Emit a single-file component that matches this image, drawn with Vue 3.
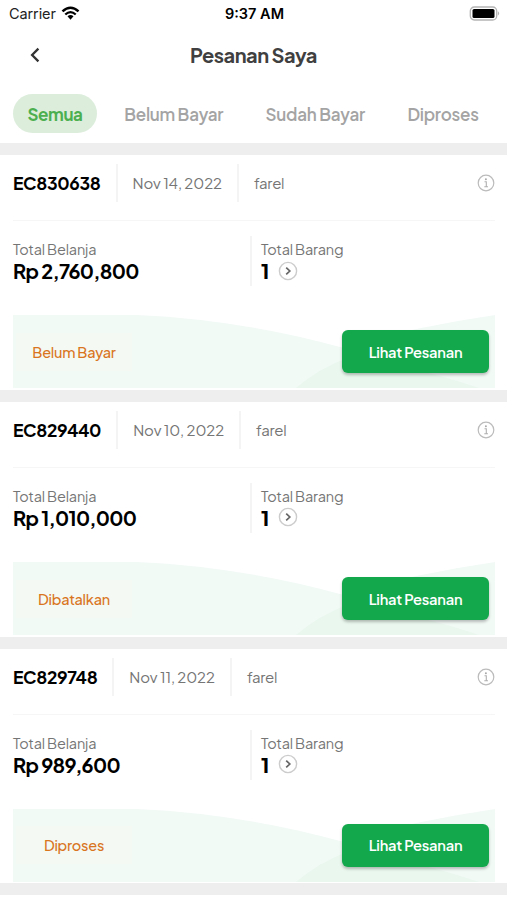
<script setup>
const tabs = ['Semua', 'Belum Bayar', 'Sudah Bayar', 'Diproses']
const orders = [
  { id: 'EC830638', date: 'Nov 14, 2022', user: 'farel', total: 'Rp 2,760,800', items: 1, status: 'Belum Bayar' },
  { id: 'EC829440', date: 'Nov 10, 2022', user: 'farel', total: 'Rp 1,010,000', items: 1, status: 'Dibatalkan' },
  { id: 'EC829748', date: 'Nov 11, 2022', user: 'farel', total: 'Rp 989,600', items: 1, status: 'Diproses' },
]
</script>

<template>
  <main class="screen">
    <div class="statusbar">
      <div class="carrier">
        <span>Carrier</span>
        <svg class="wifi" viewBox="0 0 20 15" width="19" height="14">
          <path d="M1.4 5.8 Q10 -2 18.6 5.8" fill="none" stroke="#000" stroke-width="2.7" />
          <path d="M4.4 9.1 Q10 4 15.6 9.1" fill="none" stroke="#000" stroke-width="2.5" />
          <path d="M6.8 11 Q10 8.2 13.2 11 L10 14.6 Z" fill="#000" />
        </svg>
      </div>
      <span class="clock">9:37 AM</span>
      <svg class="battery" viewBox="0 0 31 15" width="31" height="15">
        <rect x="1.3" y="1" width="26.4" height="13" rx="4" fill="#fff" stroke="#b4b4b4" stroke-width="1.3" />
        <rect x="3.5" y="3" width="22" height="9" rx="1.6" fill="#000" />
        <path d="M28.9 5.3 Q31.4 7.5 28.9 9.7 Z" fill="#b4b4b4" />
      </svg>
    </div>

    <header class="titlebar">
      <svg class="back" viewBox="0 0 12 16" width="12" height="16">
        <path d="M8.4 1.6 L2.1 8 L8.4 14.4" fill="none" stroke="#333" stroke-width="2.3" />
      </svg>
      <h1>Pesanan Saya</h1>
    </header>

    <nav class="tabs">
      <button v-for="(tab, i) in tabs" :key="tab" class="tab" :class="['tab-' + i, { active: i === 0 }]">
        <span>{{ tab }}</span>
      </button>
    </nav>

    <article v-for="order in orders" :key="order.id" class="order">
      <div class="meta">
        <strong class="id">{{ order.id }}</strong>
        <span class="date">{{ order.date }}</span>
        <span class="user">{{ order.user }}</span>
        <svg class="info" viewBox="0 0 18 18" width="18" height="18">
          <circle cx="9" cy="9" r="7.8" fill="none" stroke="#bbb" stroke-width="1.2" />
          <circle cx="8.9" cy="5.2" r="1" fill="#a8a8a8" />
          <path d="M7.5 7.8 H9.3 V12.7 M7.3 12.8 H11" fill="none" stroke="#b0b0b0" stroke-width="1.1" />
        </svg>
      </div>

      <div class="totals">
        <div class="total">
          <span class="label">Total Belanja</span>
          <strong class="value">{{ order.total }}</strong>
        </div>
        <div class="total goods">
          <span class="label">Total Barang</span>
          <div class="count">
            <strong class="value">{{ order.items }}</strong>
            <svg class="go" viewBox="0 0 20 20" width="20" height="20">
              <circle cx="10" cy="10" r="8.6" fill="#fff" stroke="#ccc" stroke-width="1.4" />
              <path d="M8.2 6.6 L11.8 10 L8.2 13.4" fill="none" stroke="#666" stroke-width="1.7" />
            </svg>
          </div>
        </div>
      </div>

      <div class="actions">
        <svg class="waves" viewBox="0 0 482 74" preserveAspectRatio="none">
          <path d="M0 0 H125 Q230 5 329 33 Q400 12 482 0 V74 H0 Z" fill="#f2faf6" />
          <path d="M283 74 Q306 54 335 43 Q410 54 466 74 Z" fill="#e9f7ee" />
        </svg>
        <span class="state">{{ order.status }}</span>
        <button class="view">Lihat Pesanan</button>
      </div>
    </article>
  </main>
</template>

<style>
body { margin: 0; background: #fff; }
</style>

<style scoped>
.screen {
  width: 507px;
  height: 900px;
  overflow: hidden;
  background: #fff;
  font-family: "Plus Jakarta Sans", Inter, sans-serif;
  color: #000;
}
button { border: 0; padding: 0; background: none; font: inherit; color: inherit; letter-spacing: inherit; white-space: nowrap; }
span, strong { white-space: nowrap; }

.statusbar {
  display: grid;
  grid-template-columns: 1fr auto 1fr;
  align-items: center;
  height: 27px;
  padding: 0 7px 0 9px;
  font-family: Inter, sans-serif;
  font-size: 14.5px;
}
.carrier { display: flex; align-items: center; gap: 5px; color: #222; letter-spacing: -0.1px; }
.wifi { margin-top: -2px; }
.clock { font-weight: 600; }
.battery { justify-self: end; }

.titlebar {
  display: grid;
  grid-template-columns: 29px 1fr 29px;
  align-items: center;
  height: 55px;
  padding: 0 13px 2px;
}
.back { justify-self: end; }
h1 { margin: 0; text-align: center; font-size: 20px; line-height: 26px; font-weight: 700; color: #404040; letter-spacing: -0.5px; }

.tabs {
  display: flex;
  align-items: center;
  height: 39px;
  padding: 10px 0 10px 13px;
  border-bottom: 12px solid #eee;
  font-size: 17px;
  font-weight: 600;
  letter-spacing: -0.25px;
  color: #a4a4a4;
}
.tab { width: 141.5px; height: 39px; flex: none; padding-top: 1px; }
.tab-0 { width: 84px; margin-right: 6px; }
.tab-3 { width: 114px; }
.active { border-radius: 20px; background: #dceddc; color: #4caf50; font-weight: 700; letter-spacing: -0.4px; }

.order { height: 234.8px; border-bottom: 12px solid #eee; padding: 0 12px 0 13px; display: flex; flex-direction: column; }
.meta { display: flex; align-items: center; height: 66px; flex: none; border-bottom: 1px solid #f6f6f6; box-sizing: border-box; font-size: 15px; color: #757575; padding-bottom: 9px; }
.id { font-size: 17.5px; color: #000; letter-spacing: -0.36px; }
.date, .user { height: 38px; line-height: 38px; border-left: 2px solid #f4f4f4; margin-left: 15px; padding-left: 15px; letter-spacing: -0.1px; }
.user { letter-spacing: -0.3px; }
.info { margin-left: auto; }

.totals { display: grid; grid-template-columns: 237px 1fr; padding-top: 15px; height: 50px; flex: none; }
.total { display: flex; flex-direction: column; padding-top: 3px; }
.goods { border-left: 2px solid #f4f4f4; padding-left: 9px; }
.label { font-size: 14.5px; line-height: 21px; color: #757575; letter-spacing: -0.2px; }
.value { font-size: 20px; line-height: 22px; font-weight: 700; letter-spacing: -0.68px; }
.goods .value { font-weight: 800; }
.count { display: flex; align-items: center; gap: 9.5px; height: 22px; }
.go { margin-bottom: 1px; }

.actions { position: relative; display: flex; align-items: center; justify-content: space-between; margin-top: auto; margin-bottom: 1.5px; height: 73px; padding: 0 6px 0 3px; }
.waves { position: absolute; left: 0; top: 0; width: 100%; height: 100%; }
.state { position: relative; width: 116px; height: 38px; line-height: 38px; text-align: center; background: rgba(255, 243, 234, 0.2); color: #d9751e; font-size: 14.5px; font-weight: 500; letter-spacing: -0.25px; }
.view { position: relative; width: 147px; height: 43px; border-radius: 6px; background: #14a84d; color: #fff; font-size: 14.7px; font-weight: 600; letter-spacing: -0.25px; box-shadow: 0 2px 3px rgba(0, 0, 0, 0.25); }
</style>
